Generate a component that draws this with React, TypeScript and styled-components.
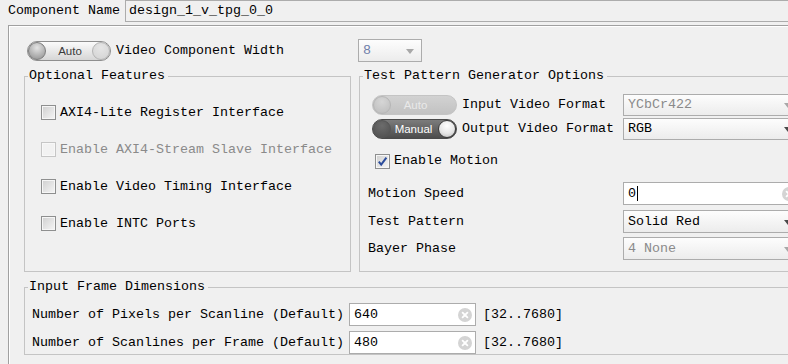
import React from 'react';
import styled, { createGlobalStyle, css } from 'styled-components';

const GlobalStyle = createGlobalStyle`
  html, body {
    margin: 0;
    padding: 0;
    background: #f0f0f0;
    overflow: hidden;
  }
  body {
    font-family: "Liberation Mono", "DejaVu Sans Mono", monospace;
    font-size: 13.333px;
    line-height: 16px;
    color: #000;
  }
`;

const Page = styled.div`
    width: 788px;
    height: 364px;
    overflow: hidden;
    background: #f0f0f0;
`;

const TopRow = styled.div`
    display: flex;
    height: 22px;
`;

const TopLabel = styled.div`
    width: 125px;
    box-sizing: border-box;
    padding-left: 8px;
    display: flex;
    align-items: center;
    white-space: nowrap;
`;

const NameField = styled.div`
    flex: 1;
    box-sizing: border-box;
    border: 1px solid #acacac;
    border-right: none;
    padding-left: 3px;
    display: flex;
    align-items: center;
    background: #f0f0f0;
`;

const Panel = styled.div`
    margin: 3px 0 0 8px;
    height: 400px;
    border-top: 1px solid #a0a0a0;
    border-left: 1px solid #a0a0a0;
    box-shadow: inset 1px 1px 0 #fff;
    padding: 13px 0 0 15px;
`;

const WidthRow = styled.div`
    display: flex;
    align-items: center;
    height: 23px;
`;

const RowLabel = styled.span<{ $width?: number; $pad?: number }>`
    white-space: nowrap;
    box-sizing: border-box;
    ${p => p.$width && css`width: ${p.$width}px; flex-shrink: 0;`}
    padding-left: ${p => p.$pad || 0}px;
`;

const Spacer = styled.span<{ $w: number }>`
    width: ${p => p.$w}px;
    flex-shrink: 0;
`;

/* ---------- toggle (Auto / Manual) ---------- */

type ToggleKind = 'auto' | 'manual' | 'off';

const TogglePill = styled.div<{ $kind: ToggleKind; $width: number }>`
    position: relative;
    flex-shrink: 0;
    box-sizing: border-box;
    width: ${p => p.$width}px;
    height: 20px;
    border-radius: 10px;
    display: flex;
    align-items: center;
    justify-content: center;
    font-family: "Liberation Sans", Arial, sans-serif;
    font-size: 11.5px;
    ${p => p.$kind === 'auto' && css`
        border: 1px solid #8e8e8e;
        background: linear-gradient(#fbfbfb, #d6d6d6);
        color: #3a3a3a;
        padding-left: 2px;
    `}
    ${p => p.$kind === 'off' && css`
        border: 1px solid #c4c4c4;
        background: linear-gradient(#d2d2d2, #c2c2c2);
        color: #e9e9e9;
        padding-left: 2px;
    `}
    ${p => p.$kind === 'manual' && css`
        border: 1px solid #4a4a4a;
        background: linear-gradient(#7c7c7c, #4c4c4c);
        color: #fff;
        padding-left: 16px;
        padding-right: 18px;
    `}
`;

const ToggleText = styled.span`
    position: relative;
    z-index: 1;
`;

const Knob = styled.span<{ $side: 'left' | 'right'; $tone: 'dark' | 'light' | 'ghost' | 'pale' | 'shade' }>`
    position: absolute;
    top: 0px;
    ${p => (p.$side === 'left' ? 'left: 0px;' : 'right: 0px;')}
    width: 18px;
    height: 18px;
    box-sizing: border-box;
    border-radius: 50%;
    ${p => p.$tone === 'dark' && css`
        background: radial-gradient(circle at 50% 30%, #e4e4e4 0%, #b4b4b4 55%, #8e8e8e 100%);
        border: 1px solid #7c7c7c;
    `}
    ${p => p.$tone === 'ghost' && css`
        background: radial-gradient(circle at 50% 30%, #e6e6e6 0%, #d2d2d2 100%);
        border: 1px solid #b4b4b4;
    `}
    ${p => p.$tone === 'pale' && css`
        background: radial-gradient(circle at 50% 30%, #d6d6d6 0%, #bcbcbc 100%);
        border: 1px solid #b6b6b6;
    `}
    ${p => p.$tone === 'light' && css`
        background: radial-gradient(circle at 50% 30%, #ffffff 0%, #e6e6e6 55%, #b8b8b8 100%);
        border: 1px solid #3c3c3c;
    `}
    ${p => p.$tone === 'shade' && css`
        background: radial-gradient(circle at 50% 30%, #6c6c6c 0%, #4e4e4e 100%);
        border: 1px solid #565656;
    `}
`;

const Toggle = ({ kind, width }: { kind: ToggleKind; width: number }) => (
    <TogglePill $kind={kind} $width={width}>
        {kind === 'manual' ? (
            <>
                <Knob $side="left" $tone="shade" />
                <ToggleText>Manual</ToggleText>
                <Knob $side="right" $tone="light" />
            </>
        ) : (
            <>
                <Knob $side="left" $tone={kind === 'auto' ? 'dark' : 'pale'} />
                <ToggleText>Auto</ToggleText>
                {kind === 'auto' && <Knob $side="right" $tone="ghost" />}
            </>
        )}
    </TogglePill>
);

/* ---------- dropdowns and fields ---------- */

const SelectBox = styled.div<{ $width: number; $height?: number; $disabled?: boolean; $tint?: string }>`
    position: relative;
    flex-shrink: 0;
    box-sizing: border-box;
    width: ${p => p.$width}px;
    height: ${p => p.$height || 22}px;
    border: 1px solid #acacac;
    background: linear-gradient(#fdfdfd, #ececec);
    padding-left: 4px;
    display: flex;
    align-items: center;
    color: ${p => p.$tint || (p.$disabled ? '#8a8a8a' : '#000')};
`;

const Arrow = styled.span<{ $disabled?: boolean }>`
    position: absolute;
    right: 7px;
    top: 50%;
    margin-top: -2px;
    width: 0;
    height: 0;
    border-left: 4.5px solid transparent;
    border-right: 4.5px solid transparent;
    border-top: 5px solid ${p => (p.$disabled ? '#a8a8a8' : '#4a4a4a')};
`;

const TextBox = styled.div<{ $width: number }>`
    position: relative;
    flex-shrink: 0;
    box-sizing: border-box;
    width: ${p => p.$width}px;
    height: 23px;
    border: 1px solid #acacac;
    background: #fff;
    padding-left: 4px;
    display: flex;
    align-items: center;
`;

const Caret = styled.span`
    display: inline-block;
    width: 1px;
    height: 15px;
    background: #000;
    margin-left: 1px;
`;

const ClearIcon = styled.svg`
    position: absolute;
    right: 3px;
    top: 50%;
    margin-top: -7px;
`;

const Clear = () => (
    <ClearIcon width="14" height="14" viewBox="0 0 14 14">
        <circle cx="7" cy="7" r="7" fill="#d4d4d4" />
        <path d="M4.6 4.6 L9.4 9.4 M9.4 4.6 L4.6 9.4" stroke="#fff" strokeWidth="1.8" strokeLinecap="round" />
    </ClearIcon>
);

/* ---------- checkbox ---------- */

const Box = styled.span<{ $disabled?: boolean }>`
    flex-shrink: 0;
    box-sizing: border-box;
    width: 15px;
    height: 15px;
    display: flex;
    align-items: center;
    justify-content: center;
    ${p => p.$disabled ? css`
        border: 1px solid #c6c6c6;
        box-shadow: inset 0 0 0 1px #f8f8f8;
        background: #f2f2f2;
    ` : css`
        border: 1px solid #8e8f8f;
        box-shadow: inset 0 0 0 1px #f6f6f6;
        background: linear-gradient(135deg, #cfcfcf, #f6f6f6);
    `}
`;

const CheckRow = styled.div<{ $muted?: boolean }>`
    display: flex;
    align-items: center;
    height: 15px;
    gap: 4px;
    white-space: nowrap;
    color: ${p => (p.$muted ? '#8a8a8a' : '#000')};
`;

const Check = ({ label, disabled, checked }: { label: string; disabled?: boolean; checked?: boolean }) => (
    <CheckRow $muted={disabled}>
        <Box $disabled={disabled}>
            {checked && (
                <svg width="11" height="11" viewBox="0 0 11 11">
                    <path d="M1.8 5.6 L4.2 8.6 L9.4 1.6" stroke="#2b4c9c" strokeWidth="2" fill="none" />
                </svg>
            )}
        </Box>
        {label}
    </CheckRow>
);

/* ---------- group boxes ---------- */

const GroupRow = styled.div`
    display: flex;
    align-items: stretch;
    gap: 8px;
    margin-top: 6px;
`;

const Group = styled.fieldset<{ $width: number }>`
    margin: 0;
    padding: 0;
    min-width: 0;
    box-sizing: border-box;
    width: ${p => p.$width}px;
    flex-shrink: 0;
    border: 1px solid #c4c4c4;
`;

const Legend = styled.legend`
    margin-left: 3px;
    padding: 0 3px 0 1px;
    line-height: 16px;
    white-space: nowrap;
`;

const CheckList = styled.div`
    display: flex;
    flex-direction: column;
    gap: 22px;
    padding: 21px 0 0 16px;
`;

const FormList = styled.div`
    display: flex;
    flex-direction: column;
    padding: 10px 0 11px 0;
`;

const FormRow = styled.div<{ $top?: number }>`
    display: grid;
    grid-template-columns: 263px auto;
    align-items: center;
    margin-top: ${p => p.$top || 0}px;
`;

const ToggleCell = styled.div`
    display: flex;
    align-items: center;
    gap: 5px;
    padding-left: 12px;
    white-space: nowrap;
`;

const LabelCell = styled.div<{ $pad?: number }>`
    padding-left: ${p => p.$pad ?? 8}px;
    white-space: nowrap;
    display: flex;
    align-items: center;
    height: 22px;
`;

const BottomGroup = styled(Group)`
    margin-top: 7px;
`;

const DimList = styled.div`
    display: flex;
    flex-direction: column;
    gap: 5px;
    padding: 8px 0 0 7px;
`;

const DimRow = styled.div`
    display: flex;
    align-items: center;
`;

const Range = styled.span`
    margin-left: 7px;
    white-space: nowrap;
`;

export default function App() {
    return (
        <Page>
            <GlobalStyle />
            <TopRow>
                <TopLabel>Component Name</TopLabel>
                <NameField>design_1_v_tpg_0_0</NameField>
            </TopRow>
            <Panel>
                <WidthRow>
                    <Spacer $w={3} />
                    <Toggle kind="auto" width={84} />
                    <RowLabel $width={247} $pad={5}>Video Component Width</RowLabel>
                    <SelectBox $width={64} $height={23} $disabled $tint="#7080aa">
                        8
                        <Arrow $disabled />
                    </SelectBox>
                </WidthRow>
                <GroupRow>
                    <Group $width={327}>
                        <Legend>Optional Features</Legend>
                        <CheckList>
                            <Check label="AXI4-Lite Register Interface" />
                            <Check label="Enable AXI4-Stream Slave Interface" disabled />
                            <Check label="Enable Video Timing Interface" />
                            <Check label="Enable INTC Ports" />
                        </CheckList>
                    </Group>
                    <Group $width={460}>
                        <Legend>Test Pattern Generator Options</Legend>
                        <FormList>
                            <FormRow>
                                <ToggleCell>
                                    <Toggle kind="off" width={85} />
                                    Input Video Format
                                </ToggleCell>
                                <SelectBox $width={177} $disabled>
                                    YCbCr422
                                    <Arrow $disabled />
                                </SelectBox>
                            </FormRow>
                            <FormRow $top={2}>
                                <ToggleCell>
                                    <Toggle kind="manual" width={85} />
                                    Output Video Format
                                </ToggleCell>
                                <SelectBox $width={177}>
                                    RGB
                                    <Arrow />
                                </SelectBox>
                            </FormRow>
                            <FormRow $top={10}>
                                <LabelCell $pad={15}>
                                    <Check label="Enable Motion" checked />
                                </LabelCell>
                            </FormRow>
                            <FormRow $top={10}>
                                <LabelCell>Motion Speed</LabelCell>
                                <TextBox $width={177}>
                                    0<Caret />
                                    <Clear />
                                </TextBox>
                            </FormRow>
                            <FormRow $top={5}>
                                <LabelCell>Test Pattern</LabelCell>
                                <SelectBox $width={177} $height={23}>
                                    Solid Red
                                    <Arrow />
                                </SelectBox>
                            </FormRow>
                            <FormRow $top={4}>
                                <LabelCell>Bayer Phase</LabelCell>
                                <SelectBox $width={177} $height={23} $disabled>
                                    4 None
                                    <Arrow $disabled />
                                </SelectBox>
                            </FormRow>
                        </FormList>
                    </Group>
                </GroupRow>
                <BottomGroup $width={800}>
                    <Legend>Input Frame Dimensions</Legend>
                    <DimList>
                        <DimRow>
                            <RowLabel $width={317}>Number of Pixels per Scanline (Default)</RowLabel>
                            <TextBox $width={127}>
                                640
                                <Clear />
                            </TextBox>
                            <Range>[32..7680]</Range>
                        </DimRow>
                        <DimRow>
                            <RowLabel $width={317}>Number of Scanlines per Frame (Default)</RowLabel>
                            <TextBox $width={127}>
                                480
                                <Clear />
                            </TextBox>
                            <Range>[32..7680]</Range>
                        </DimRow>
                    </DimList>
                </BottomGroup>
            </Panel>
        </Page>
    );
}
